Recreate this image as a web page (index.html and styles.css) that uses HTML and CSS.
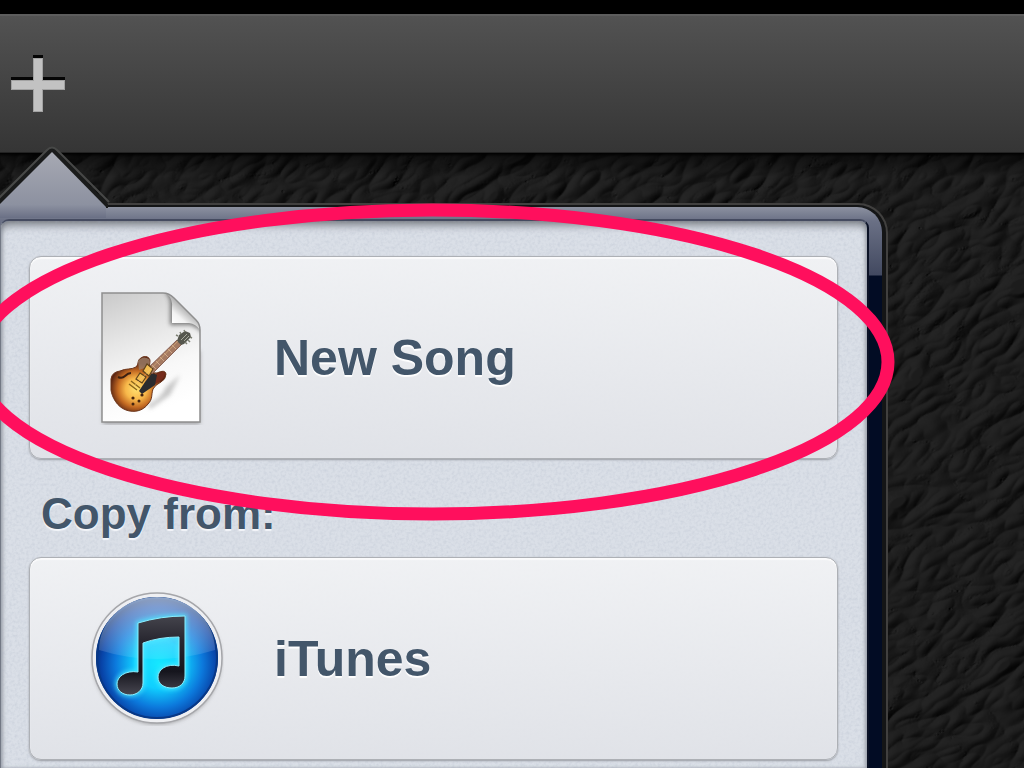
FILE: index.html
```
<!DOCTYPE html>
<html lang="en">
<head>
  <meta charset="utf-8">
  <title>My Songs</title>
  <link rel="stylesheet" href="styles.css">
</head>
<body>
  <div class="status-bar"></div>
  <header class="toolbar">
    <button class="add-button" type="button" aria-label="Add song">
      <svg width="54" height="57" viewBox="0 0 54 57">
        <path d="M22 0h10v22h22v10H32v22H22V32H0V22h22z" fill="#050505"/>
        <path d="M22 3h10v22h22v10H32v22H22V35H0V25h22z" fill="#a2a2a2"/>
        <path d="M23 4h8v22h22v8H31v22h-8V34H1v-8h22z" fill="#c2c2c2"/>
      </svg>
    </button>
  </header>

  <main class="desk">
    <svg class="leather" width="100%" height="100%" aria-hidden="true">
      <filter id="leather" x="0" y="0" width="100%" height="100%" color-interpolation-filters="sRGB">
        <feTurbulence type="turbulence" baseFrequency="0.022 0.042" numOctaves="2" seed="5"/>
        <feColorMatrix values="0 0 0 0 0  0 0 0 0 0  0 0 0 0 0  1.6 0 0 0 0"/>
        <feGaussianBlur stdDeviation="0.7"/>
        <feDiffuseLighting surfaceScale="3" diffuseConstant="0.145" lighting-color="#ffffff">
          <feDistantLight azimuth="240" elevation="50"/>
        </feDiffuseLighting>
      </filter>
      <rect x="-700" y="-300" width="2600" height="2000" filter="url(#leather)" transform="rotate(-32)"/>
    </svg>

    <section class="popover">
      <div class="frame">
        <div class="panel">
          <svg class="grain" width="100%" height="100%" aria-hidden="true">
            <filter id="grain" x="0" y="0" width="100%" height="100%">
              <feTurbulence type="fractalNoise" baseFrequency="0.35" numOctaves="2"/>
              <feColorMatrix values="0 0 0 0 0.35  0 0 0 0 0.4  0 0 0 0 0.5  0.9 0 0 0 -0.36"/>
            </filter>
            <rect width="100%" height="100%" filter="url(#grain)"/>
          </svg>

          <button class="choice" type="button">
            <svg class="icon" viewBox="0 0 134 134" aria-hidden="true">
              <defs>
                <linearGradient id="paper" x1="0" y1="0" x2="0.3" y2="1">
                  <stop offset="0" stop-color="#c9c9c9"/>
                  <stop offset="0.4" stop-color="#e6e6e6"/>
                  <stop offset="0.7" stop-color="#f8f8f8"/>
                  <stop offset="1" stop-color="#ffffff"/>
                </linearGradient>
                <linearGradient id="fold" x1="82" y1="32" x2="94" y2="18" gradientUnits="userSpaceOnUse">
                  <stop offset="0" stop-color="#ffffff"/>
                  <stop offset="0.5" stop-color="#f2f2f2"/>
                  <stop offset="1" stop-color="#b9b9b9"/>
                </linearGradient>
                <radialGradient id="sunburst" cx="46" cy="98" r="26" gradientUnits="userSpaceOnUse">
                  <stop offset="0" stop-color="#ffe070"/>
                  <stop offset="0.4" stop-color="#f8b84a"/>
                  <stop offset="0.7" stop-color="#c46a22"/>
                  <stop offset="1" stop-color="#5a2412"/>
                </radialGradient>
                <filter id="soft" x="-30%" y="-30%" width="160%" height="160%"><feGaussianBlur stdDeviation="2"/></filter>
                <clipPath id="sheet"><path d="M12 2h61q6 0 11 5l22 22q4 4 4 10v92H12z"/></clipPath>
              </defs>
              <path d="M13 60h97v73H13z" fill="#555" opacity=".5" filter="url(#soft)"/>
              <path d="M12 2h61q6 0 11 5l22 22q4 4 4 10v92H12z" fill="url(#paper)"/>
              <g clip-path="url(#sheet)">
                <path d="M74 0q7 6 6 16v18h20q8 2 14 10L112 0z" fill="#555" opacity=".75" filter="url(#soft)"/>
                <path d="M77 3q6 5 5 14v15h17q7 1 11 7v-8L84 4z" fill="url(#fold)"/>
              </g>
              <path d="M12 2h61q6 0 11 5l22 22q4 4 4 10v92H12z" fill="none" stroke="#8f8f8f" stroke-width="1.500"/>

              <path d="M58 114q14-8 18-18l14-12-10 20-20 14z" fill="#777" opacity=".4" filter="url(#soft)"/>
              <path d="M21 88q1-7 9-8c6-3 11-1 16-4 3-3 1-7 5-9 4-3 9-1 9 3l-1 9q4 4 8 3 8-4 9 1 0 5-5 8-6 3-8 7c-2 6 0 10-5 15-5 7-14 9-22 6-9-3-14-13-15-20z" fill="url(#sunburst)" stroke="#6b3419" stroke-width="1"/>
              <path d="M48 70q5-6 11-2 2 3-1 8l-9 3z" fill="#9c806a" opacity=".8"/>
              <path d="M66 83q8-4 9-1 0 5-5 8l-6 4z" fill="#762c1b"/>
              <path d="M62 82l5 2-2 10-13 9-3-3 6-9z" fill="#2a2b2e"/>
              <path d="M57 78L87 49l5 4-30 30z" fill="#a57a62" stroke="#7b5144" stroke-width=".8"/>
              <path d="M62 74l4 4m0-8l4 4m0-8l4 4m0-8l4 4m0-8l4 4m0-8l4 4" stroke="#d8b193" stroke-width=".8"/>
              <path d="M87 50l2-6 6-4 5 2 1 4-7 7-3 1z" fill="#55564d"/>
              <path d="M88 45l-2-1m5-1l-1-2m5 0l-1-2m6 7l2 1m-4 2l2 2m-5 0l2 2" stroke="#7c7f72" stroke-width="1.500"/>
              <path d="M91 49l6-6m-3 7l5-5" stroke="#a8aa9c" stroke-width="1"/>
              <path d="M57 73l6 5-4 7-6-5zM50 82l6 4-4 6-6-4z" fill="#f3bd52" stroke="#5d421c" stroke-width="1.200"/>
              <path d="M41 90l9 7M39 93l8 6" stroke="#8b651c" stroke-width="1.500"/>
              <path d="M44 95L88 50" stroke="#f5d08c" stroke-width=".6" opacity=".7"/>
              <path d="M28 86q4 2 7-1t6-3" fill="none" stroke="#3b2012" stroke-width="2"/>
              <circle cx="43" cy="107" r="1.600" fill="#46240f"/>
              <circle cx="43" cy="113" r="1.500" fill="#46240f"/>
              <circle cx="49" cy="110" r="1.500" fill="#46240f"/>
              <circle cx="52" cy="104" r="1.600" fill="#46240f"/>
            </svg>
            <span>New Song</span>
          </button>

          <h2 class="group-title">Copy from:</h2>

          <button class="choice" type="button">
            <svg class="icon" viewBox="0 0 134 134" aria-hidden="true">
              <defs>
                <radialGradient id="disc" cx="69" cy="72" r="64" gradientUnits="userSpaceOnUse">
                  <stop offset="0" stop-color="#16e8ff"/>
                  <stop offset="0.38" stop-color="#10ceff"/>
                  <stop offset="0.68" stop-color="#0c79dc"/>
                  <stop offset="0.9" stop-color="#0843a7"/>
                  <stop offset="1" stop-color="#06307c"/>
                </radialGradient>
                <linearGradient id="shine" x1="0" y1="0" x2="0" y2="1">
                  <stop offset="0" stop-color="#ffffff" stop-opacity=".55"/>
                  <stop offset="1" stop-color="#ffffff" stop-opacity=".08"/>
                </linearGradient>
                <linearGradient id="note" x1="0" y1="0" x2="0" y2="1">
                  <stop offset="0" stop-color="#44444c"/>
                  <stop offset="0.3" stop-color="#292831"/>
                  <stop offset="0.7" stop-color="#15151d"/>
                  <stop offset="1" stop-color="#484751"/>
                </linearGradient>
                <filter id="glow" x="-30%" y="-30%" width="160%" height="160%"><feGaussianBlur stdDeviation="2"/></filter>
              </defs>
              <circle cx="67" cy="68" r="64" fill="#777" opacity=".7" filter="url(#glow)"/>
              <circle cx="67" cy="66" r="65" fill="#eeeff2" stroke="#a5a6aa" stroke-width="1.500"/>
              <circle cx="67" cy="66" r="61" fill="url(#disc)"/>
              <circle cx="67" cy="66" r="60" fill="none" stroke="#083886" stroke-width="2"/>
              <path d="M9 58a58 53 0 0 1 116 0q-58 18-116 0z" fill="url(#shine)"/>
              <path d="M48 31q23-7 47-7v60c0 7-5 12-13 12s-14-4-14-11 8-14 21-11V45q-20 0-36 6v40c0 7-6 12-13 12s-13-4-13-11 8-14 21-12z" fill="#22eaff" stroke="#50efff" stroke-width="4" opacity=".7" filter="url(#glow)"/>
              <path d="M48 31q23-7 47-7v60c0 7-5 12-13 12s-14-4-14-11 8-14 21-11V45q-20 0-36 6v40c0 7-6 12-13 12s-13-4-13-11 8-14 21-12z" fill="url(#note)" stroke="#8ceeff" stroke-width="1"/>
            </svg>
            <span>iTunes</span>
          </button>
        </div>
      </div>

      <svg class="arrow" width="120" height="73" viewBox="0 0 120 73" aria-hidden="true">
        <defs>
          <linearGradient id="arrowFill" x1="0" y1="6" x2="0" y2="72" gradientUnits="userSpaceOnUse">
            <stop offset="0" stop-color="#a7a9b3"/>
            <stop offset="0.8" stop-color="#8c91a0"/>
            <stop offset="1" stop-color="#6a7085"/>
          </linearGradient>
        </defs>
        <path d="M-8 61L48 4q4-4 8 0l52 54v4H-8z" fill="#1a1b1b"/>
        <path d="M-8 59L47 4q5-5 10 0l52 52" fill="none" stroke="#474847" stroke-width="2"/>
        <path d="M-8 66L52 6l54 55v11H-8z" fill="url(#arrowFill)"/>
      </svg>
    </section>
  </main>

  <!-- highlighter ring drawn over the first choice -->
  <svg class="ring" width="900" height="330" viewBox="0 0 900 330" aria-hidden="true">
    <ellipse cx="432" cy="164" rx="456" ry="152" fill="none" stroke="#ff0f5d" stroke-width="13"/>
  </svg>
</body>
</html>
```
FILE: styles.css
```
* {
  box-sizing: border-box;
}

body {
  margin: 0;
  height: 100vh;
  display: flex;
  flex-direction: column;
  overflow: hidden;
  position: relative;
  background: #1c1c1c;
  font-family: "Liberation Sans", Arial, sans-serif;
  font-weight: bold;
  color: #43566a;
}

button {
  font: inherit;
  color: inherit;
  cursor: pointer;
}

.status-bar {
  flex: none;
  height: 14px;
  background: #000;
}

.toolbar {
  flex: none;
  height: 139px;
  display: flex;
  align-items: center;
  padding: 0 0 2px 11px;
  background: linear-gradient(#525252, #353535);
  border-top: 2px solid #5d5d5d;
  border-bottom: 1px solid #222;
}

.add-button {
  padding: 0;
  border: 0;
  background: none;
}

.add-button svg {
  display: block;
}

.desk {
  flex: 1;
  min-height: 0;
  display: flex;
  position: relative;
  padding: 50px 136px 0 0;
  background: #1c1c1c;
}

.desk::before {
  content: "";
  position: absolute;
  inset: 0 0 auto;
  height: 24px;
  background: linear-gradient(#000, rgba(0, 0, 0, 0.5) 4px, transparent);
  z-index: 1;
}

.leather {
  position: absolute;
  inset: 0;
}

.popover {
  flex: 1;
  display: flex;
  position: relative;
  z-index: 2;
  background: #141516;
  border: 2px solid #41403f;
  border-width: 2px 2px 0 0;
  border-top-right-radius: 30px;
  padding: 2px 4px 0 0;
}

.arrow {
  position: absolute;
  left: 0;
  top: -59px;
}

.frame {
  flex: 1;
  min-width: 0;
  display: flex;
  padding: 12px 13px 0 0;
  border-top-right-radius: 25px;
  background: linear-gradient(#8c91a0, #6a7085 14px, #424960 68px, #020c24 69px);
}

.panel {
  flex: 1;
  min-width: 0;
  position: relative;
  padding: 35px 29px 0 28px;
  background: #dadfe7;
  border: 2px solid #3d4459;
  border-width: 2px 2px 0 1px;
  border-color: #454b60 #0b1226 #000 #737985;
  border-radius: 9px 9px 0 0;
  box-shadow: inset 0 7px 9px -3px #777b82, inset -2px 0 3px #b0b5bf, inset 2px 0 3px #b0b5bf;
}

.grain {
  position: absolute;
  inset: 0;
  opacity: 0.5;
}

.choice {
  position: relative;
  display: flex;
  align-items: center;
  gap: 50px;
  width: 100%;
  height: 203px;
  padding: 0 60px;
  border: 1px solid #adb0b5;
  border-radius: 12px;
  background: linear-gradient(rgba(242, 243, 245, 0.92), rgba(225, 227, 232, 0.92));
  box-shadow: inset 0 2px 1px #fbfbfc, 0 1px 2px #9a9da3;
  font-size: 50px;
  text-align: left;
  text-shadow: 0 2px 1px #fff;
}

.icon {
  flex: none;
  width: 134px;
  height: 134px;
}

.group-title {
  position: relative;
  margin: 30px 12px 18px;
  font-size: 44px;
  line-height: 50px;
  text-shadow: 0 2px 1px #f4f6fa;
}

.ring {
  position: absolute;
  left: 0;
  top: 198px;
  z-index: 3;
  pointer-events: none;
}
```
